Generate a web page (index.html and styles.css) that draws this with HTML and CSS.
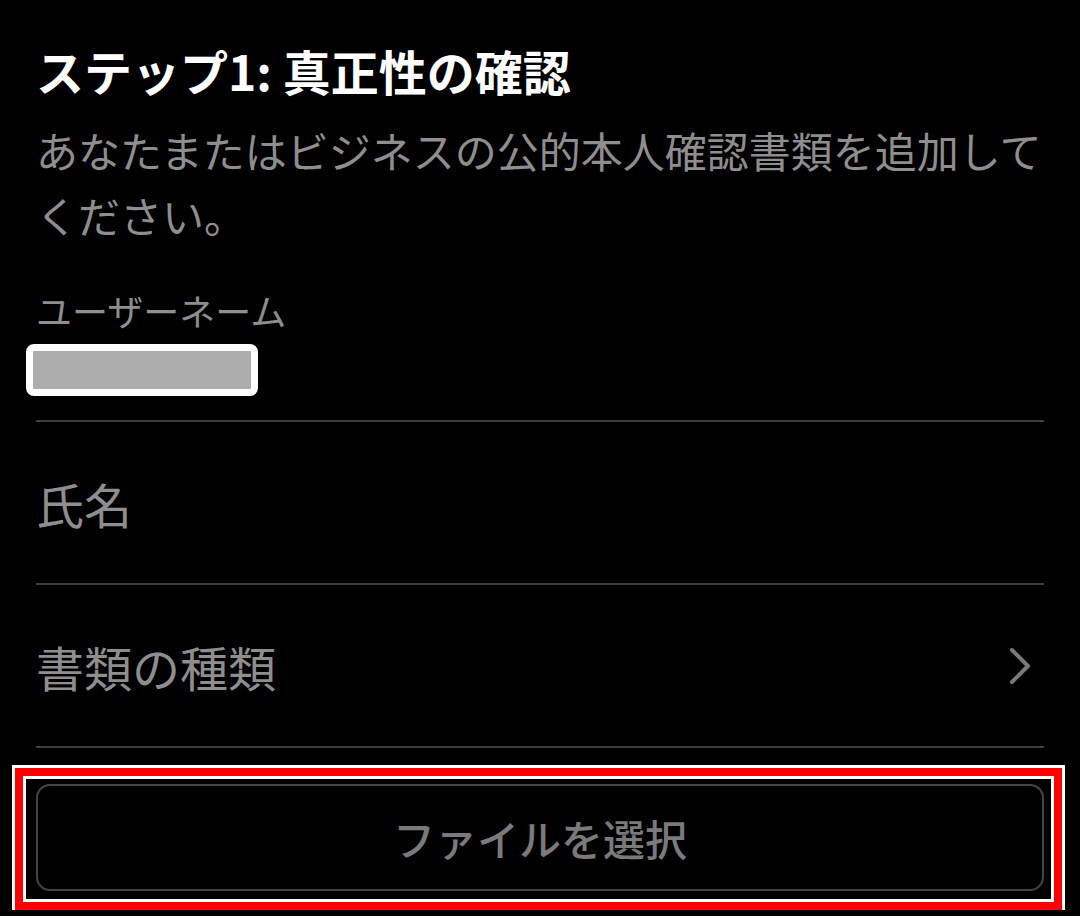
FILE: index.html
```html
<!DOCTYPE html>
<html lang="ja">
<head>
  <meta charset="UTF-8" />
  <meta name="viewport" content="width=device-width, initial-scale=1" />
  <title>ステップ1: 真正性の確認</title>
  <link rel="stylesheet" href="styles.css">
</head>
<body>

<h1 class="title">ステップ1: 真正性の確認</h1>

<p class="lead">あなたまたはビジネスの公的本人確認書類を追加してください。</p>

<!-- ユーザーネーム -->
<div class="field-label">ユーザーネーム</div>
<div class="redacted"></div>

<div class="row">氏名</div>

<div class="row row-select">
  <span>書類の種類</span>
  <svg class="chevron" width="24" height="40" viewBox="0 0 24 40" aria-hidden="true">
    <path d="M4 4 L20 20 L4 36" fill="none" stroke="#7a7a7a" stroke-width="4" stroke-linecap="round" stroke-linejoin="round" />
  </svg>
</div>

<!-- 選択枠 -->
<div class="highlight">
  <button class="file-btn">ファイルを選択</button>
</div>

</body>
</html>
```

FILE: styles.css
```css
body {
  margin: 0;
  padding: 0 36px;
  background: #000;
  color: #fff;
  font-family: "Noto Sans CJK JP", "Noto Sans", sans-serif;
}

.title {
  margin: 39px 0 0;
  font-size: 48px;
  line-height: 62px;
  font-weight: 700;
  color: #fff;
}

.lead {
  margin: 16px 0 0;
  font-size: 42px;
  line-height: 65px;
  color: #8e8e8e;
}

.field-label {
  margin-top: 40px;
  font-size: 36px;
  line-height: 46px;
  color: #8e8e8e;
}

.redacted {
  margin: 11px 0 0 -10px;
  width: 218px;
  height: 38px;
  border: 7px solid #fff;
  border-radius: 8px;
  background: #adadad;
}

.row {
  display: flex;
  align-items: center;
  justify-content: space-between;
  height: 161px;
  border-top: 2px solid #3e3e3e;
  font-size: 48px;
  color: #8e8e8e;
}

.redacted + .row {
  margin-top: 24px;
}

.row-select {
  border-bottom: 2px solid #3e3e3e;
}

.chevron {
  margin-right: 12px;
}

.highlight {
  margin: 20px -18px 0 -21px;
  padding: 8px 10px 11px 13px;
  border: 8px solid #f00;
  outline: 3px solid #fff;
  box-shadow: inset 0 0 0 3px #fff;
}

.file-btn {
  display: block;
  width: 100%;
  height: 107px;
  background: #000;
  border: 2px solid #444;
  border-radius: 14px;
  font-family: "Noto Sans CJK JP", "Noto Sans", sans-serif;
  font-size: 42px;
  font-weight: 500;
  color: #7a7a7a;
}
```
